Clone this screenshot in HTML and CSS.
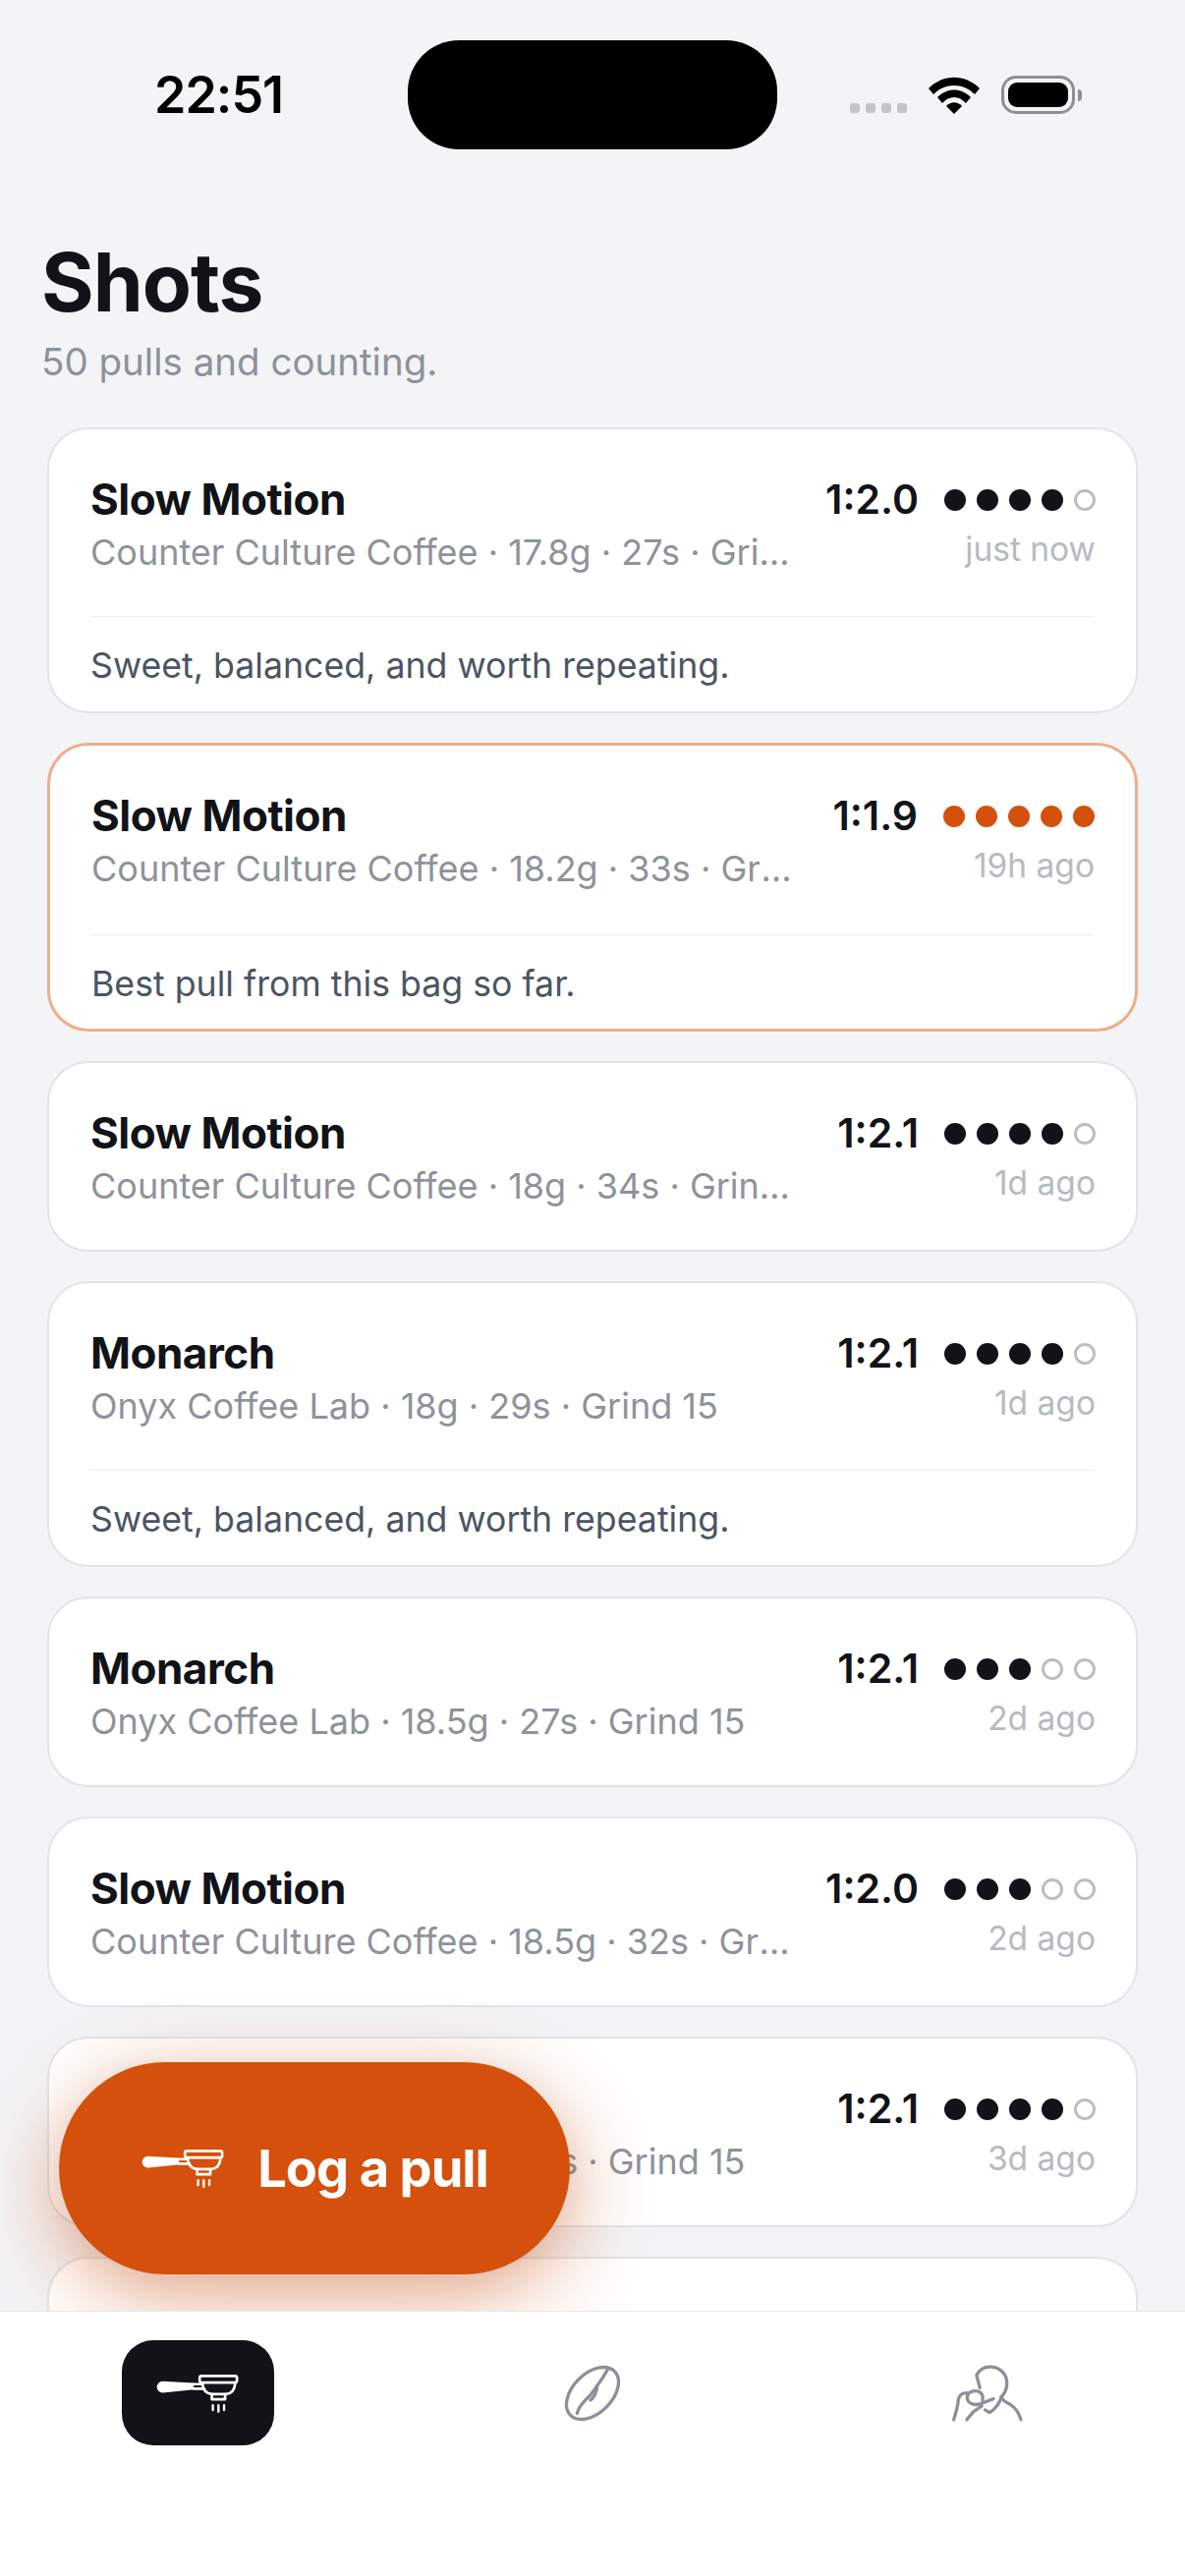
FILE: index.html
```html
<!DOCTYPE html>
<html>
<head>
  <title>Shots</title>
  <meta name="viewport" content="width=device-width, initial-scale=1.0">
  <link rel="stylesheet" href="styles.css">
</head>
<body>
  <svg class="defs" width="0" height="0">
    <symbol id="portafilter" viewBox="70 55 255 125">
      <path fill="currentColor" d="M92 81 L186 86 V106 L92 116 A17.5 17.5 0 0 1 92 81 Z"/>
      <g fill="none" stroke="currentColor" stroke-width="8" stroke-linecap="round" stroke-linejoin="round">
        <path d="M186 90 H212 M186 104 H218"/>
        <rect x="204" y="65" width="113" height="20" rx="6"/>
        <path d="M212 86 C214 108 226 119 242 120 H284 C300 119 310 108 312 86"/>
        <path d="M241 121 V136 H281 V121"/>
        <path d="M244 154 V168 M261 154 V173 M278 154 V168" stroke-width="7"/>
      </g>
    </symbol>
  </svg>

  <div class="status-bar">
    <span class="clock">22:51</span>
    <div class="island"></div>
    <div class="status-icons">
      <div class="signal"><i></i><i></i><i></i><i></i></div>
      <svg class="wifi" viewBox="0 0 52 38" width="52" height="38">
        <path d="M0 12 C15 -3 37 -3 52 12 L47 18 C35 6 17 6 5 18 Z"/>
        <path d="M9 21 C19 11 33 11 43 21 L38 27 C31 19 21 19 14 27 Z"/>
        <path d="M18 30 C23 25 29 25 34 30 L26 38 Z"/>
      </svg>
      <div class="battery"><div class="battery-fill"></div></div>
      <div class="battery-nub"></div>
    </div>
  </div>

  <header class="page-head">
    <h1>Shots</h1>
    <p>50 pulls and counting.</p>
  </header>

  <main class="content">
    <div class="shot-list">
      <div class="card">
        <div class="card-top">
          <div class="info">
            <div class="name">Slow Motion</div>
            <div class="meta">Counter Culture Coffee · 17.8g · 27s · Grind 15</div>
          </div>
          <div class="stats">
            <div class="stats-row"><span class="ratio">1:2.0</span><div class="dots"><i></i><i></i><i></i><i></i><i class="off"></i></div></div>
            <div class="when">just now</div>
          </div>
        </div>
        <div class="note">Sweet, balanced, and worth repeating.</div>
      </div>

      <div class="card best">
        <div class="card-top">
          <div class="info">
            <div class="name">Slow Motion</div>
            <div class="meta">Counter Culture Coffee · 18.2g · 33s · Grind 15</div>
          </div>
          <div class="stats">
            <div class="stats-row"><span class="ratio">1:1.9</span><div class="dots"><i></i><i></i><i></i><i></i><i></i></div></div>
            <div class="when">19h ago</div>
          </div>
        </div>
        <div class="note">Best pull from this bag so far.</div>
      </div>

      <div class="card">
        <div class="card-top">
          <div class="info">
            <div class="name">Slow Motion</div>
            <div class="meta">Counter Culture Coffee · 18g · 34s · Grind 15</div>
          </div>
          <div class="stats">
            <div class="stats-row"><span class="ratio">1:2.1</span><div class="dots"><i></i><i></i><i></i><i></i><i class="off"></i></div></div>
            <div class="when">1d ago</div>
          </div>
        </div>
      </div>

      <div class="card">
        <div class="card-top">
          <div class="info">
            <div class="name">Monarch</div>
            <div class="meta">Onyx Coffee Lab · 18g · 29s · Grind 15</div>
          </div>
          <div class="stats">
            <div class="stats-row"><span class="ratio">1:2.1</span><div class="dots"><i></i><i></i><i></i><i></i><i class="off"></i></div></div>
            <div class="when">1d ago</div>
          </div>
        </div>
        <div class="note">Sweet, balanced, and worth repeating.</div>
      </div>

      <div class="card">
        <div class="card-top">
          <div class="info">
            <div class="name">Monarch</div>
            <div class="meta">Onyx Coffee Lab · 18.5g · 27s · Grind 15</div>
          </div>
          <div class="stats">
            <div class="stats-row"><span class="ratio">1:2.1</span><div class="dots"><i></i><i></i><i></i><i class="off"></i><i class="off"></i></div></div>
            <div class="when">2d ago</div>
          </div>
        </div>
      </div>

      <div class="card">
        <div class="card-top">
          <div class="info">
            <div class="name">Slow Motion</div>
            <div class="meta">Counter Culture Coffee · 18.5g · 32s · Grind 15</div>
          </div>
          <div class="stats">
            <div class="stats-row"><span class="ratio">1:2.0</span><div class="dots"><i></i><i></i><i></i><i class="off"></i><i class="off"></i></div></div>
            <div class="when">2d ago</div>
          </div>
        </div>
      </div>

      <div class="card">
        <div class="card-top">
          <div class="info">
            <div class="name">Monarch</div>
            <div class="meta">Onyx Coffee Lab · 18.5g · 27s · Grind 15</div>
          </div>
          <div class="stats">
            <div class="stats-row"><span class="ratio">1:2.1</span><div class="dots"><i></i><i></i><i></i><i></i><i class="off"></i></div></div>
            <div class="when">3d ago</div>
          </div>
        </div>
      </div>

      <div class="card">
        <div class="card-top">
          <div class="info">
            <div class="name">Monarch</div>
            <div class="meta">Onyx Coffee Lab · 18g · 30s · Grind 15</div>
          </div>
        </div>
      </div>
    </div>

    <button class="fab">
      <svg class="pf-icon"><use href="#portafilter"/></svg>
      <span>Log a pull</span>
    </button>
  </main>

  <nav class="tab-bar">
    <div class="tab"><div class="tab-active"><svg class="pf-icon"><use href="#portafilter"/></svg></div></div>
    <div class="tab">
      <svg class="tab-icon" viewBox="100 75 180 180" width="60" height="60">
        <ellipse cx="190" cy="165" rx="95" ry="60" transform="rotate(-45 190 165)"/>
        <path d="M236 92 C226 112 214 128 204 142 C194 156 190 166 172 182 C160 194 148 206 143 226"/>
        <path d="M204 146 C202 160 196 176 184 186"/>
      </svg>
    </div>
    <div class="tab">
      <svg class="tab-icon" viewBox="50 40 235 195" width="78" height="65">
        <path d="M144 122 L134 84 C142 66 160 57 180 58 C208 60 227 82 227 108 C227 128 220 140 210 150 C214 164 226 166 238 174 C254 184 264 200 270 220"/>
        <path d="M210 150 C206 168 190 190 174 198 L160 190"/>
        <path d="M186 156 L150 170 C136 176 112 176 106 158 C102 144 112 132 130 132 C146 132 156 144 152 160"/>
        <path d="M104 138 C90 138 80 146 78 160 C76 184 70 200 64 220"/>
        <path d="M104 220 L124 196 L150 178"/>
      </svg>
    </div>
  </nav>
</body>
</html>
```

FILE: styles.css
```css
* {
  box-sizing: border-box;
}

body {
  margin: 0;
  width: 1206px;
  height: 2622px;
  overflow: hidden;
  display: flex;
  flex-direction: column;
  background: #f3f4f6;
  color: #111318;
  font-family: Inter, "Liberation Sans", sans-serif;
}

.defs {
  position: absolute;
}

/* Status bar */
.status-bar {
  display: flex;
  align-items: center;
  flex-shrink: 0;
  height: 111px;
  margin-top: 41px;
  padding-left: 157px;
}

.clock {
  width: 130px;
  font-size: 52px;
  font-weight: 600;
  letter-spacing: -1px;
  color: #000;
}

.island {
  width: 376px;
  height: 111px;
  margin-left: 128px;
  border-radius: 52px;
  background: #000;
}

.status-icons {
  position: relative;
  display: flex;
  align-items: center;
  margin-left: 74px;
  height: 40px;
}

.signal {
  display: flex;
  gap: 6px;
  align-self: flex-end;
  margin-bottom: 2px;
}

.signal i {
  width: 10px;
  height: 10px;
  border-radius: 3px;
  background: #c4c4c6;
}

.wifi {
  margin-left: 22px;
}

.battery {
  width: 75px;
  height: 39px;
  margin-left: 22px;
  padding: 4px;
  border: 3px solid #8e8e93;
  border-radius: 15px;
}

.battery-fill {
  height: 100%;
  border-radius: 9px;
  background: #000;
}

.battery-nub {
  width: 4px;
  height: 12px;
  margin-left: 3px;
  border-radius: 0 4px 4px 0;
  background: #8e8e93;
}

/* Heading */
.page-head {
  flex-shrink: 0;
  margin-top: 88px;
  padding-left: 42px;
}

.page-head h1 {
  margin: 0;
  font-size: 82px;
  line-height: 96px;
  font-weight: 700;
  letter-spacing: -1px;
}

.page-head p {
  margin: 7px 0 0;
  font-size: 38.5px;
  line-height: 50px;
  color: #8d919c;
}

/* List */
.content {
  position: relative;
  flex: 1;
  min-height: 0;
  margin-top: 42px;
  overflow: hidden;
}

.shot-list {
  display: flex;
  flex-direction: column;
  gap: 30px;
  padding: 0 48px;
}

.card {
  flex-shrink: 0;
  border: 2px solid #e2e4e8;
  border-radius: 42px;
  background: #fff;
}

.card-top {
  display: flex;
  justify-content: space-between;
  padding: 43px 41px 40px 42px;
}

.card.best {
  border: 3px solid #efae8a;
}

.best .card-top {
  padding-bottom: 42px;
}

.info {
  width: 714px;
}

.name {
  font-size: 44px;
  line-height: 56px;
  font-weight: 700;
  letter-spacing: -0.5px;
}

.meta {
  margin-top: 1px;
  font-size: 36px;
  line-height: 50px;
  color: #8e929c;
  white-space: nowrap;
  overflow: hidden;
  text-overflow: ellipsis;
}

.stats {
  display: flex;
  flex-direction: column;
  align-items: flex-end;
}

.stats-row {
  display: flex;
  align-items: center;
  gap: 26px;
  height: 56px;
}

.ratio {
  font-size: 41px;
  font-weight: 600;
}

.dots {
  display: flex;
  gap: 11px;
  margin-top: 2px;
}

.dots i {
  width: 22px;
  height: 22px;
  border-radius: 50%;
  background: #111318;
}

.dots i.off {
  background: none;
  border: 3px solid #b9bdc6;
}

.best .dots i {
  background: #d4500c;
}

.when {
  margin-top: -1px;
  font-size: 33.5px;
  line-height: 48px;
  color: #b6bac3;
}

.note {
  margin: 0 42px;
  padding: 22px 0 20px;
  border-top: 1px solid #eeeff2;
  font-size: 35.7px;
  line-height: 54px;
  color: #4b5563;
}

.best .note {
  padding-bottom: 19px;
}

/* Floating button */
.fab {
  position: absolute;
  left: 60px;
  bottom: 37px;
  display: flex;
  align-items: center;
  justify-content: center;
  gap: 33px;
  width: 520px;
  height: 216px;
  border: none;
  border-radius: 108px;
  background: #d4500c;
  color: #fff;
  font-family: inherit;
  font-size: 52.5px;
  font-weight: 700;
  letter-spacing: -1px;
  box-shadow: 0 24px 90px rgba(212, 80, 12, 0.45), 0 8px 40px rgba(17, 19, 24, 0.08);
}

.pf-icon {
  width: 86px;
  height: 42px;
}

/* Tab bar */
.tab-bar {
  display: grid;
  grid-template-columns: repeat(3, 1fr);
  flex-shrink: 0;
  height: 270px;
  padding-top: 29px;
  border-top: 1px solid #e5e7eb;
  background: #fff;
}

.tab {
  display: flex;
  justify-content: center;
  align-items: center;
  height: 107px;
}

.tab-active {
  display: flex;
  align-items: center;
  justify-content: center;
  width: 155px;
  height: 107px;
  border-radius: 32px;
  background: #111318;
  color: #fff;
}

.tab-icon {
  fill: none;
  stroke: #8b909c;
  stroke-width: 10;
  stroke-linecap: round;
  stroke-linejoin: round;
}
```
